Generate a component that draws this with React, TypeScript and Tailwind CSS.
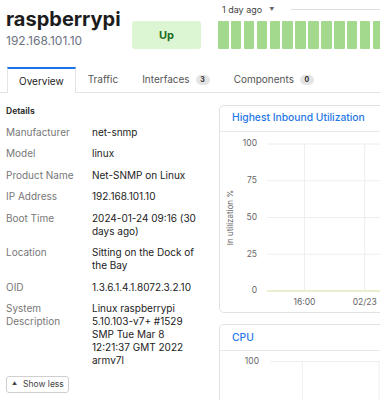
const details: [string, string][] = [
  ["Manufacturer", "net-snmp"],
  ["Model", "linux"],
  ["Product Name", "Net-SNMP on Linux"],
  ["IP Address", "192.168.101.10"],
  ["Boot Time", "2024-01-24 09:16 (30 days ago)"],
  ["Location", "Sitting on the Dock of the Bay"],
  ["OID", "1.3.6.1.4.1.8072.3.2.10"],
  ["System Description", "Linux raspberrypi 5.10.103-v7+ #1529 SMP Tue Mar 8 12:21:37 GMT 2022 armv7l"],
]

const bars = Array.from({ length: 14 })

function Badge({ n }: { n: number }) {
  return (
    <span className="ml-[6px] inline-flex h-[10px] w-[14px] items-center justify-center rounded-full bg-[#e4e4e4] text-[7px] font-bold leading-none text-[#333]">
      {n}
    </span>
  )
}

export default function App() {
  return (
    <div className="h-[400px] w-[380px] overflow-hidden bg-white font-['Inter',sans-serif] text-[#222]">
      {/* Header */}
      <div className="flex items-start">
        <div className="w-[132px] shrink-0 pl-[6px] pt-[7px]">
          <h1 className="text-[20px] font-bold leading-[24px] text-[#1c1c1c]">raspberrypi</h1>
          <div className="mt-[3px] text-[12px] leading-[14px] text-[#6b7280]">192.168.101.10</div>
        </div>
        <div className="mt-[21px] flex h-[28px] w-[69px] shrink-0 items-center justify-center rounded-[3px] bg-[#dcf5d3] text-[11px] font-bold text-[#1d6b22]">
          Up
        </div>
        <div className="ml-[17px] min-w-0 flex-1">
          <div className="flex h-[19px] items-center">
            <span className="ml-[4px] text-[9px] text-[#444]">1 day ago</span>
            <span className="ml-[7px] text-[5px] text-[#666]">▼</span>
            <div className="ml-[17px] h-px flex-1 bg-[#dedede]" />
          </div>
          <div className="mt-[2px] flex gap-[2.4px]">
            {bars.map((_, i) => (
              <div key={i} className="h-[28px] w-[10.5px] shrink-0 rounded-[1px] bg-[#a3d98c]" />
            ))}
          </div>
        </div>
      </div>

      {/* Tabs */}
      <div className="mt-[18px] flex h-[26px] border-b border-[#e3e3e3] pl-[7px] text-[10px]">
        <div className="-mb-px flex h-[26px] items-center border-x border-t-2 border-[#e3e3e3] border-t-[#1a73e8] bg-white px-[11px] text-[#222]">
          Overview
        </div>
        <div className="flex items-center px-[12px] text-[#555]">Traffic</div>
        <div className="flex items-center px-[12px] text-[#555]">
          Interfaces
          <Badge n={3} />
        </div>
        <div className="flex items-center px-[12px] text-[#555]">
          Components
          <Badge n={0} />
        </div>
      </div>

      {/* Content */}
      <div className="flex">
        <div className="w-[219px] shrink-0 pl-[6px] pt-[11.5px]">
          <div className="text-[8.5px] font-bold leading-[12px] text-[#333]">Details</div>
          <div className="mt-[9px] grid grid-cols-[86px_110px] gap-y-[8.5px] text-[10px] leading-[13px]">
            {details.map(([k, v]) => (
              <div key={k} className="contents">
                <div className="pr-[6px] text-[#777]">{k}</div>
                <div className="text-[#222]">{v}</div>
              </div>
            ))}
          </div>
          <button className="mt-[8.5px] flex h-[17px] items-center whitespace-nowrap rounded-[3px] border border-[#cfcfcf] pl-[5px] pr-[4px] text-[8.5px] text-[#444]">
            <span className="text-[5px]">▲</span>
            <span className="ml-[6px]">Show less</span>
          </button>
        </div>

        <div className="shrink-0 pt-[11.5px]">
          {/* Inbound utilization */}
          <div className="w-[200px] rounded-[5px] border border-[#e2e2e2] bg-white">
            <div className="flex h-[26px] items-center border-b border-[#e8e8e8] pl-[12px] text-[10.3px] font-medium text-[#1f78e6]">
              Highest Inbound Utilization
            </div>
            <svg width="198" height="180" className="block font-['Inter',sans-serif]">
              {[0, 1, 2, 3, 4].map((i) => (
                <line key={i} x1="47" x2="198" y1={12 + i * 36.75} y2={12 + i * 36.75} stroke="#eeeeee" />
              ))}
              <line x1="84.5" x2="84.5" y1="12" y2="159" stroke="#eeeeee" />
              <line x1="144.7" x2="144.7" y1="12" y2="159" stroke="#eeeeee" />
              {["100", "75", "50", "25", "0"].map((t, i) => (
                <text key={t} x="37" y={12 + i * 36.75} textAnchor="end" dominantBaseline="middle" fontSize="8.5" fill="#666">
                  {t}
                </text>
              ))}
              <line x1="47" x2="198" y1="159" y2="159" stroke="#dce9a4" strokeWidth="1.2" />
              <text x="84.5" y="170.5" textAnchor="middle" dominantBaseline="middle" fontSize="8.5" fill="#666">
                16:00
              </text>
              <text x="144.7" y="170.5" textAnchor="middle" dominantBaseline="middle" fontSize="8.5" fill="#666">
                02/23
              </text>
              <text
                x="11"
                y="85.5"
                transform="rotate(-90 11 85.5)"
                textAnchor="middle"
                dominantBaseline="middle"
                fontSize="8"
                fill="#666"
              >
                In utilization %
              </text>
            </svg>
          </div>

          {/* CPU */}
          <div className="mt-[11.5px] w-[200px] rounded-[5px] border border-[#e2e2e2] bg-white">
            <div className="flex h-[26px] items-center border-b border-[#e8e8e8] pl-[12px] text-[10.3px] font-medium text-[#1f78e6]">
              CPU
            </div>
            <svg width="198" height="80" className="block font-['Inter',sans-serif]">
              <line x1="50" x2="198" y1="10.6" y2="10.6" stroke="#eeeeee" />
              <line x1="82.3" x2="82.3" y1="10.6" y2="80" stroke="#eeeeee" />
              <line x1="159" x2="159" y1="10.6" y2="80" stroke="#eeeeee" />
              <text x="39" y="10.6" textAnchor="end" dominantBaseline="middle" fontSize="8.5" fill="#666">
                100
              </text>
            </svg>
          </div>
        </div>
      </div>
    </div>
  )
}
